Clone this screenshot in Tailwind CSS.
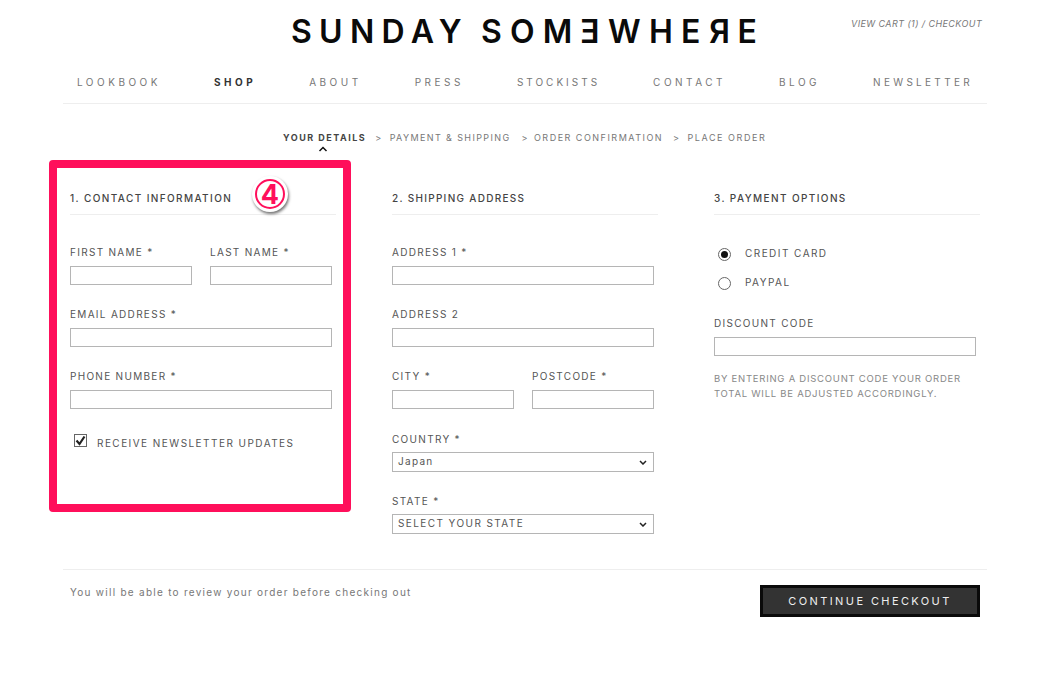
<!DOCTYPE html>
<html>
<head>
<meta charset="utf-8">
<script src="https://cdn.jsdelivr.net/npm/@tailwindcss/browser@4"></script>
</head>
<body class="bg-white font-['Inter',sans-serif] text-[#444]">
<div class="relative w-[1047px] h-[675px] overflow-hidden">
  <header class="relative h-[70px]">
    <div class="absolute left-[291px] top-[12px] text-[32px] leading-[40px] font-semibold text-[#0a0a0a] whitespace-nowrap flex">
      <span class="tracking-[7.3px]">SUNDAY</span>
      <span class="ml-[12px] tracking-[8.2px]">SOM<span class="inline-block -scale-x-100 tracking-normal mr-[8.2px]">E</span>WHE<span class="inline-block -scale-x-100 tracking-normal mr-[8.2px]">R</span>E</span>
    </div>
    <div class="absolute left-[851px] top-[18px] text-[9px] leading-[12px] italic text-[#777] tracking-[0.42px] whitespace-nowrap">VIEW CART (1) / CHECKOUT</div>
  </header>
  <nav class="ml-[63px] w-[924px] h-[34px] border-b border-[#eee] pl-[14px] pr-[14px] flex justify-between items-start pt-[6px] text-[10px] leading-[12px] tracking-[3.5px] text-[#777]">
    <a>LOOKBOOK</a><a class="font-bold text-[#333]">SHOP</a><a>ABOUT</a><a>PRESS</a><a class="tracking-[3px]">STOCKISTS</a><a>CONTACT</a><a>BLOG</a><a class="tracking-[3.3px]">NEWSLETTER</a>
  </nav>
  <div class="relative mt-[28px] h-[12px] flex pl-[283px] text-[9px] leading-[12px] tracking-[1.5px] text-[#777]">
    <span class="font-bold text-[#444]">YOUR DETAILS</span><span class="ml-[9px] mr-[7px]">&gt;</span><span class="tracking-[1.38px]">PAYMENT &amp; SHIPPING</span><span class="ml-[11px] mr-[5px]">&gt;</span><span>ORDER CONFIRMATION</span><span class="ml-[10px] mr-[7px]">&gt;</span><span class="tracking-[1.55px]">PLACE ORDER</span>
    <svg class="absolute left-[318px] top-[14px]" width="10" height="6" viewBox="0 0 10 6"><path d="M1.5 5 L5 1.5 L8.5 5" fill="none" stroke="#111" stroke-width="1.5"/></svg>
  </div>

  <main class="mt-[48px] ml-[70px] grid grid-cols-[266px_266px_266px] gap-x-[56px] text-[10px] leading-[12px] tracking-[1.3px] text-[#555]">
    <section>
      <h2 class="h-[23px] border-b border-[#eee] text-[#444] font-medium tracking-[1.4px]">1. CONTACT INFORMATION</h2>
      <div class="mt-[31px] w-[262px] grid grid-cols-2 gap-x-[18px] gap-y-[23px]">
        <label class="block">FIRST NAME *<span class="block mt-[8px] h-[19px] border border-[#b5b5b5]"></span></label>
        <label class="block">LAST NAME *<span class="block mt-[8px] h-[19px] border border-[#b5b5b5]"></span></label>
        <label class="block col-span-2">EMAIL ADDRESS *<span class="block mt-[8px] h-[19px] border border-[#b5b5b5]"></span></label>
        <label class="block col-span-2">PHONE NUMBER *<span class="block mt-[8px] h-[19px] border border-[#b5b5b5]"></span></label>
      </div>
      <div class="mt-[25px] ml-[4px] flex items-start gap-[10px]">
        <svg class="shrink-0" width="13" height="13" viewBox="0 0 13 13"><rect x="0.5" y="0.5" width="12" height="12" fill="#fff" stroke="#666"/><path d="M2.5 6.5 L5.5 10 L10.5 2.5" fill="none" stroke="#222" stroke-width="2.2"/></svg>
        <span class="mt-[3px] tracking-[1.46px]">RECEIVE NEWSLETTER UPDATES</span>
      </div>
    </section>
    <section>
      <h2 class="h-[23px] border-b border-[#eee] text-[#444] font-medium tracking-[1.3px]">2. SHIPPING ADDRESS</h2>
      <div class="mt-[31px] w-[262px] grid grid-cols-2 gap-x-[18px] gap-y-[23px]">
        <label class="block col-span-2">ADDRESS 1 *<span class="block mt-[8px] h-[19px] border border-[#b5b5b5]"></span></label>
        <label class="block col-span-2">ADDRESS 2<span class="block mt-[8px] h-[19px] border border-[#b5b5b5]"></span></label>
        <label class="block">CITY *<span class="block mt-[8px] h-[19px] border border-[#b5b5b5]"></span></label>
        <label class="block">POSTCODE *<span class="block mt-[8px] h-[19px] border border-[#b5b5b5]"></span></label>
        <label class="block col-span-2 mt-[1px]">COUNTRY *
          <span class="flex items-center justify-between mt-[7px] h-[20px] border border-[#b5b5b5] pl-[5px] pr-[6px] pb-[2px]">Japan<svg width="8" height="5" viewBox="0 0 8 5" class="mt-[3px]"><path d="M1 1 L4 4 L7 1" fill="none" stroke="#222" stroke-width="1.5"/></svg></span>
        </label>
        <label class="block col-span-2">STATE *
          <span class="flex items-center justify-between mt-[7px] h-[20px] border border-[#b5b5b5] pl-[5px] pr-[6px] pb-[2px] tracking-[1.42px]">SELECT YOUR STATE<svg width="8" height="5" viewBox="0 0 8 5" class="mt-[3px]"><path d="M1 1 L4 4 L7 1" fill="none" stroke="#222" stroke-width="1.5"/></svg></span>
        </label>
      </div>
    </section>
    <section>
      <h2 class="h-[23px] border-b border-[#eee] text-[#444] font-medium tracking-[1.4px]">3. PAYMENT OPTIONS</h2>
      <div class="mt-[31px] ml-[4px] flex items-center gap-[14px] h-[16px]">
        <svg width="13" height="13" viewBox="0 0 13 13"><circle cx="6.5" cy="6.5" r="6" fill="#fff" stroke="#666"/><circle cx="6.5" cy="6.5" r="3.5" fill="#111"/></svg>
        <span class="-mt-[2px] tracking-[1.45px]">CREDIT CARD</span>
      </div>
      <div class="mt-[13px] ml-[4px] flex items-center gap-[14px] h-[16px]">
        <svg width="13" height="13" viewBox="0 0 13 13"><circle cx="6.5" cy="6.5" r="6" fill="#fff" stroke="#666"/></svg>
        <span class="-mt-[2px] tracking-[1.45px]">PAYPAL</span>
      </div>
      <label class="block mt-[26px] w-[262px]">DISCOUNT CODE<span class="block mt-[8px] h-[19px] border border-[#b5b5b5]"></span></label>
      <p class="mt-[15px] w-[262px] text-[9.5px] leading-[15px] tracking-[0.75px] text-[#888]">BY ENTERING A DISCOUNT CODE YOUR ORDER TOTAL WILL BE ADJUSTED ACCORDINGLY.</p>
    </section>
  </main>

  <footer class="absolute left-[63px] top-[569px] w-[924px] border-t border-[#eee] h-[50px] flex justify-between pl-[7px] pr-[7px]">
    <p class="mt-[16px] text-[10px] leading-[12px] tracking-[1.27px] text-[#777]">You will be able to review your order before checking out</p>
    <button class="mt-[15px] w-[220px] h-[32px] border-[3px] border-[#0a0a0a] bg-[#333] text-[#eee] text-[11px] leading-[12px] tracking-[2.4px]">CONTINUE CHECKOUT</button>
  </footer>

  <div class="absolute left-[49px] top-[160px] w-[302px] h-[352px] border-[8px] border-[#ff0f5b] rounded-[4px]"></div>
  <div class="absolute left-[252px] top-[176px] w-[36px] h-[36px] rounded-full bg-white shadow-[1px_2px_3px_rgba(0,0,0,0.55)] flex items-center justify-center">
    <div class="w-[30px] h-[30px] rounded-full border-2 border-[#ff0f5b] flex items-center justify-center text-[#ff0f5b] text-[27px] leading-none font-bold tracking-normal">4</div>
  </div>
</div>
</body>
</html>
